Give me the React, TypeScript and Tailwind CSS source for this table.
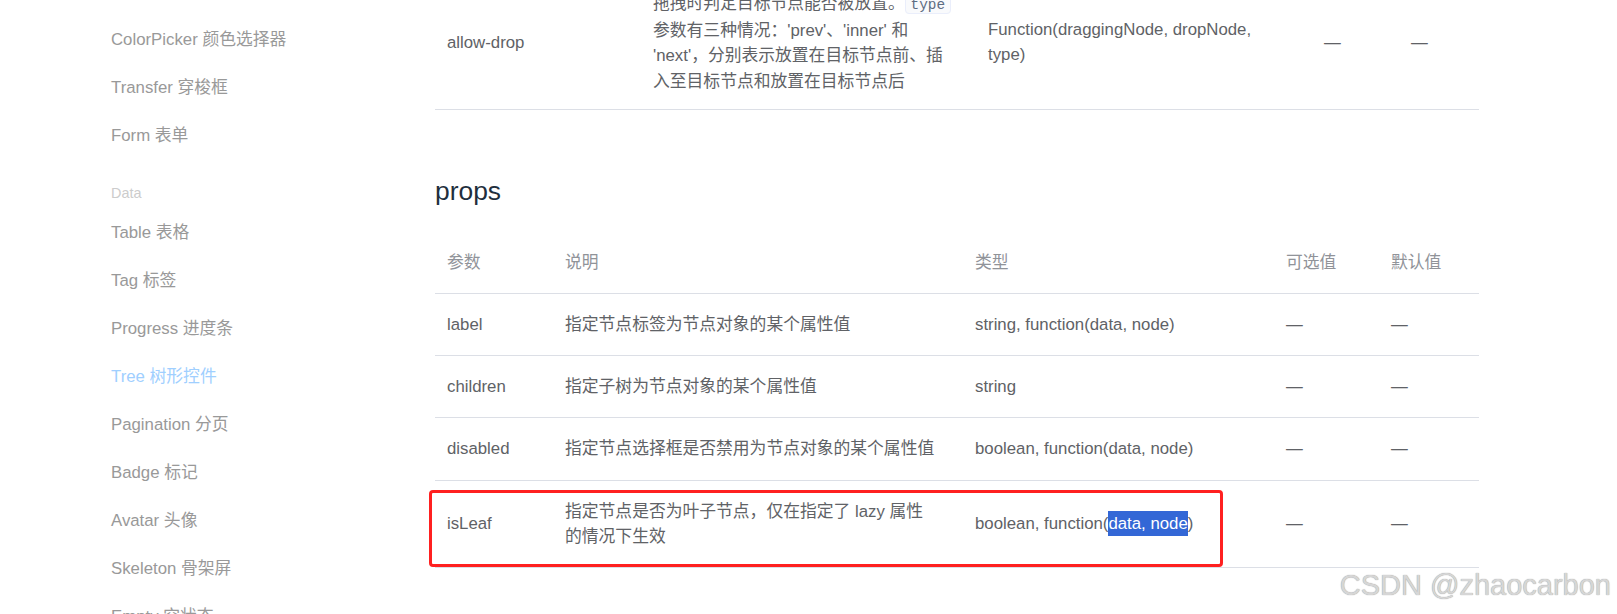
import React from "react";

const navTop = ["ColorPicker 颜色选择器", "Transfer 穿梭框", "Form 表单"];
const navData = [
  "Table 表格",
  "Tag 标签",
  "Progress 进度条",
  "Tree 树形控件",
  "Pagination 分页",
  "Badge 标记",
  "Avatar 头像",
  "Skeleton 骨架屏",
  "Empty 空状态",
];

const rows = [
  { p: "label", d: ["指定节点标签为节点对象的某个属性值"], t: "string, function(data, node)" },
  { p: "children", d: ["指定子树为节点对象的某个属性值"], t: "string" },
  { p: "disabled", d: ["指定节点选择框是否禁用为节点对象的某个属性值"], t: "boolean, function(data, node)" },
];

export default function App() {
  return (
    <div className="relative h-[614px] w-[1617px] overflow-hidden bg-white font-['Liberation_Sans','Noto_Sans_CJK_SC',sans-serif]">
      <div className="flex">
        {/* Sidebar */}
        <div className="w-[435px] shrink-0 pl-[111px] pt-[16px]">
          {navTop.map((t) => (
            <div key={t} className="h-[48px] whitespace-nowrap text-[16.8px] leading-[48px] text-[#999999]">
              {t}
            </div>
          ))}
          <div className="mt-[18px] h-[31.2px] text-[14.4px] leading-[31.2px] text-[#cccccc]">Data</div>
          {navData.map((t) => (
            <div
              key={t}
              className={
                t.startsWith("Tree")
                  ? "h-[48px] whitespace-nowrap text-[16.8px] leading-[48px] text-[#a0cfff]"
                  : "h-[48px] whitespace-nowrap text-[16.8px] leading-[48px] text-[#999999]"
              }
            >
              {t}
            </div>
          ))}
        </div>

        {/* Main */}
        <div className="-mt-[27px] w-[1044px] shrink-0 text-[16.8px] leading-[25.2px] text-[#606266]">
          <table className="w-full table-fixed border-collapse">
            <colgroup>
              <col className="w-[200px]" />
              <col className="w-[335px]" />
              <col className="w-[336px]" />
              <col className="w-[87px]" />
              <col className="w-[86px]" />
            </colgroup>
            <tbody>
              <tr className="border-b border-[#dcdfe6]">
                <td className="pb-[15px] pl-[12px] pr-[18px] pt-[18px] align-middle">allow-drop</td>
                <td className="px-[18px] pb-[15px] pt-[18px] align-middle">
                  <div className="whitespace-nowrap">
                    拖拽时判定目标节点能否被放置。
                    <code className="rounded-[4px] border border-[#eaeefb] bg-[#f9fafc] px-[4.8px] font-['Liberation_Mono',monospace] text-[14.4px] text-[#5e6d82]">
                      type
                    </code>
                  </div>
                  <div className="whitespace-nowrap">参数有三种情况：'prev'、'inner' 和</div>
                  <div className="whitespace-nowrap">'next'，分别表示放置在目标节点前、插</div>
                  <div className="whitespace-nowrap">入至目标节点和放置在目标节点后</div>
                </td>
                <td className="px-[18px] pb-[15px] pt-[18px] align-middle">
                  <div className="whitespace-nowrap">Function(draggingNode, dropNode,</div>
                  <div className="whitespace-nowrap">type)</div>
                </td>
                <td className="px-[18px] pb-[15px] pt-[18px] align-middle">—</td>
                <td className="px-[18px] pb-[15px] pt-[18px] align-middle">—</td>
              </tr>
            </tbody>
          </table>

          <h3 className="mb-[24px] mt-[64px] h-[34px] text-[26.4px] font-normal leading-[34px] text-[#1f2f3d]">props</h3>

          <div className="relative">
            <table className="w-full table-fixed border-collapse">
              <colgroup>
                <col className="w-[112px]" />
                <col className="w-[410px]" />
                <col className="w-[311px]" />
                <col className="w-[105px]" />
                <col className="w-[106px]" />
              </colgroup>
              <thead>
                <tr className="border-b border-[#dcdfe6]">
                  <th className="py-[18px] pl-[12px] pr-[18px] text-left font-normal text-[#909399]">参数</th>
                  <th className="px-[18px] py-[18px] text-left font-normal text-[#909399]">说明</th>
                  <th className="px-[18px] py-[18px] text-left font-normal text-[#909399]">类型</th>
                  <th className="px-[18px] py-[18px] text-left font-normal text-[#909399]">可选值</th>
                  <th className="px-[18px] py-[18px] text-left font-normal text-[#909399]">默认值</th>
                </tr>
              </thead>
              <tbody>
                {rows.map((r) => (
                  <tr key={r.p} className="border-b border-[#dcdfe6]">
                    <td className="py-[18px] pl-[12px] pr-[18px] align-middle">{r.p}</td>
                    <td className="whitespace-nowrap px-[18px] py-[18px] align-middle">{r.d[0]}</td>
                    <td className="whitespace-nowrap px-[18px] py-[18px] align-middle">{r.t}</td>
                    <td className="px-[18px] py-[18px] align-middle">—</td>
                    <td className="px-[18px] py-[18px] align-middle">—</td>
                  </tr>
                ))}
                <tr className="border-b border-[#dcdfe6]">
                  <td className="py-[18px] pl-[12px] pr-[18px] align-middle">isLeaf</td>
                  <td className="px-[18px] py-[18px] align-middle">
                    <div className="whitespace-nowrap">指定节点是否为叶子节点，仅在指定了 lazy 属性</div>
                    <div className="whitespace-nowrap">的情况下生效</div>
                  </td>
                  <td className="whitespace-nowrap px-[18px] py-[18px] align-middle">
                    boolean, function(
                    <span className="inline-block bg-[#3367d6] leading-[25.2px] text-white">data, node</span>)
                  </td>
                  <td className="px-[18px] py-[18px] align-middle">—</td>
                  <td className="px-[18px] py-[18px] align-middle">—</td>
                </tr>
              </tbody>
            </table>
            {/* red annotation box */}
            <div className="pointer-events-none absolute left-[-6px] top-[258px] h-[77px] w-[794px] rounded-[4px] border-[3px] border-[#ff2020]" />
          </div>
        </div>
      </div>

      {/* watermark */}
      <div className="pointer-events-none absolute bottom-[14px] right-[6px] whitespace-nowrap text-[29px] leading-none text-[#d6d6d6] [text-shadow:0_0_1px_#8a8a8a]">
        CSDN @zhaocarbon
      </div>
    </div>
  );
}
